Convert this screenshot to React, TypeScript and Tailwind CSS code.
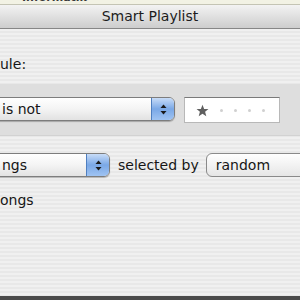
import React from "react";

// Aqua popup arrows (up / down)
function Arrows() {
  return (
    <svg width="7" height="11" viewBox="0 0 7 11">
      <path d="M3.5 0.5 L6.5 4 L0.5 4 Z" fill="#1a1a1a" />
      <path d="M3.5 10.5 L6.5 7 L0.5 7 Z" fill="#1a1a1a" />
    </svg>
  );
}

function Popup({ label, width }: { label: string; width: string }) {
  return (
    <div className={`${width} h-[24px] -ml-[12px] shrink-0 flex rounded-[6px] border border-[#7d7d7d] bg-gradient-to-b from-[#ffffff] via-[#f4f4f4] to-[#e2e2e2] shadow-[0_1px_1px_rgba(0,0,0,0.25)] overflow-hidden`}>
      <div className="flex-1 flex items-center pl-[13px] text-[14px] whitespace-nowrap">{label}</div>
      <div className="w-[23px] flex items-center justify-center border-l border-[#4f7fc0] bg-gradient-to-b from-[#c8dcf7] via-[#7aa8e6] to-[#9fc3f2]">
        <Arrows />
      </div>
    </div>
  );
}

function Stars() {
  return (
    <div className="w-[96px] h-[26px] shrink-0 bg-white border border-[#b8b8b8] border-t-[#7a7a7a] flex items-center pl-[11px] gap-[11px]">
      <svg width="13" height="13" viewBox="0 0 24 24">
        <path d="M12 1.5 L15 9 L23 9.3 L16.8 14.3 L19 22.5 L12 17.8 L5 22.5 L7.2 14.3 L1 9.3 L9 9 Z" fill="#5f5f5f" />
      </svg>
      {[0, 1, 2, 3].map((i) => (
        <span key={i} className="w-[3px] h-[3px] rounded-full bg-[#d0d0d0]" />
      ))}
    </div>
  );
}

export default function App() {
  return (
    <div className="w-[300px] h-[300px] overflow-hidden flex flex-col font-['DejaVu_Sans',sans-serif] text-[#161616]">
      {/* list row behind the sheet */}
      <div className="h-[5px] relative overflow-hidden bg-[#f2f2e4] border-b border-[#c4c4b4]">
        <span className="absolute left-[22px] -top-[10px] text-[11px] font-bold text-[#3a3a3a]">Informatik</span>
      </div>

      {/* title bar */}
      <div className="h-[24px] flex items-center justify-center bg-gradient-to-b from-[#f3f3f3] to-[#cdcdcd] border-b border-[#868686] text-[14px] text-[#1c1c1c]">
        Smart Playlist
      </div>

      {/* sheet body */}
      <div className="flex-1 flex flex-col bg-[repeating-linear-gradient(to_bottom,#f0f0f0_0px,#f0f0f0_2px,#e8e8e8_2px,#e8e8e8_4px)]">
        <div className="pt-[27px] text-[14px] leading-[16px]">ule:</div>

        <div className="mt-[12px] h-[52px] bg-[#dedede] border-b border-[#d2d2d2] flex items-start pt-[13px] gap-[9px]">
          <Popup label="is not" width="w-[187px]" />
          <Stars />
        </div>

        <div className="mt-[17px] flex items-center whitespace-nowrap">
          <Popup label="ngs" width="w-[122px]" />
          <span className="ml-[8px] text-[14px]">selected by</span>
          <div className="ml-[7px] h-[24px] w-[110px] shrink-0 rounded-l-[6px] border border-[#8a8a8a] bg-gradient-to-b from-[#ffffff] to-[#e6e6e6] flex items-center pl-[9px] text-[14px]">
            random
          </div>
        </div>

        <div className="mt-[15px] text-[14px] leading-[16px]">ongs</div>
      </div>

      <div className="h-[4px] bg-[#4b4b4b]" />
    </div>
  );
}
